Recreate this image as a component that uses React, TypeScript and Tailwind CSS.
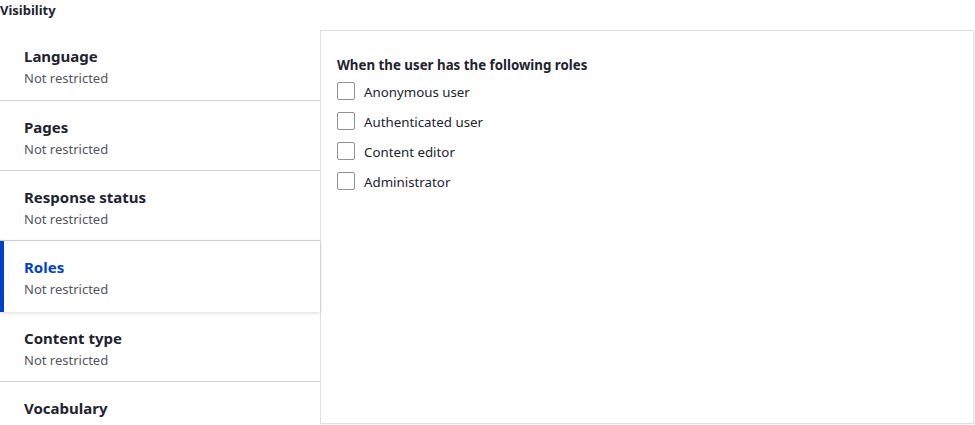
import React, { useState } from 'react';

type Tab = { title: string; summary?: string; h: string };

// row heights follow the reference: separators at 101, 171, 241, 312, 382
const tabs: Tab[] = [
  { title: 'Language', summary: 'Not restricted', h: 'h-[71px]' },
  { title: 'Pages', summary: 'Not restricted', h: 'h-[70px]' },
  { title: 'Response status', summary: 'Not restricted', h: 'h-[70px]' },
  { title: 'Roles', summary: 'Not restricted', h: 'h-[71px]' },
  { title: 'Content type', summary: 'Not restricted', h: 'h-[70px]' },
  { title: 'Vocabulary', h: 'h-[70px]' },
];

const roles = ['Anonymous user', 'Authenticated user', 'Content editor', 'Administrator'];

function App() {
  const [active, setActive] = useState(3);
  const [checked, setChecked] = useState<Record<string, boolean>>({});

  return (
    <div
      className="h-[425px] w-[975px] overflow-hidden bg-white text-[#222330]"
      style={{ fontFamily: '"Noto Sans", "Open Sans", sans-serif' }}
    >
      <div className="h-[30px] pt-[1px] text-[13px] font-bold leading-[18px]">Visibility</div>
      <div className="flex">
        <ul className="w-[320px] shrink-0">
          {tabs.map((t, i) => {
            const isActive = i === active;
            return (
              <li
                key={t.title}
                onClick={() => setActive(i)}
                className={
                  t.h +
                  (isActive
                    ? ' relative z-10 cursor-pointer border-l-4 border-[#003ecc] bg-white pl-[20px] pt-[16px] shadow-[0_1px_4px_rgba(0,0,0,0.15)]'
                    : ' cursor-pointer border-b border-[#d3d4d9] bg-white pl-[24px] pt-[16px] last:border-b-0')
                }
              >
                <div
                  className={
                    'text-[15px] font-bold leading-[20px] ' +
                    (isActive ? 'text-[#003ecc]' : 'text-[#222330]')
                  }
                >
                  {t.title}
                </div>
                {t.summary && (
                  <div className="mt-[2px] text-[13px] leading-[20px] text-[#545560]">{t.summary}</div>
                )}
              </li>
            );
          })}
        </ul>
        <div className="mr-px h-[394px] flex-1 border border-[#dedfe2] bg-white pl-[16px] pt-[25px] shadow-[1px_1px_2px_rgba(0,0,0,0.06)]">
          <div className="mb-[8px] text-[13.3px] font-bold leading-[18px]">
            When the user has the following roles
          </div>
          <div className="flex flex-col gap-[12px]">
            {roles.map(r => (
              <label key={r} className="flex h-[18px] cursor-pointer items-center gap-[9px]">
                <input
                  type="checkbox"
                  checked={!!checked[r]}
                  onChange={e => setChecked({ ...checked, [r]: e.target.checked })}
                  className="h-[18px] w-[18px] appearance-none rounded-[2px] border border-[#8e929c] bg-white checked:bg-[#003ecc]"
                />
                <span className="mt-[2px] text-[13.3px] leading-[18px] text-[#222330]">{r}</span>
              </label>
            ))}
          </div>
        </div>
      </div>
    </div>
  );
}

export default App;
